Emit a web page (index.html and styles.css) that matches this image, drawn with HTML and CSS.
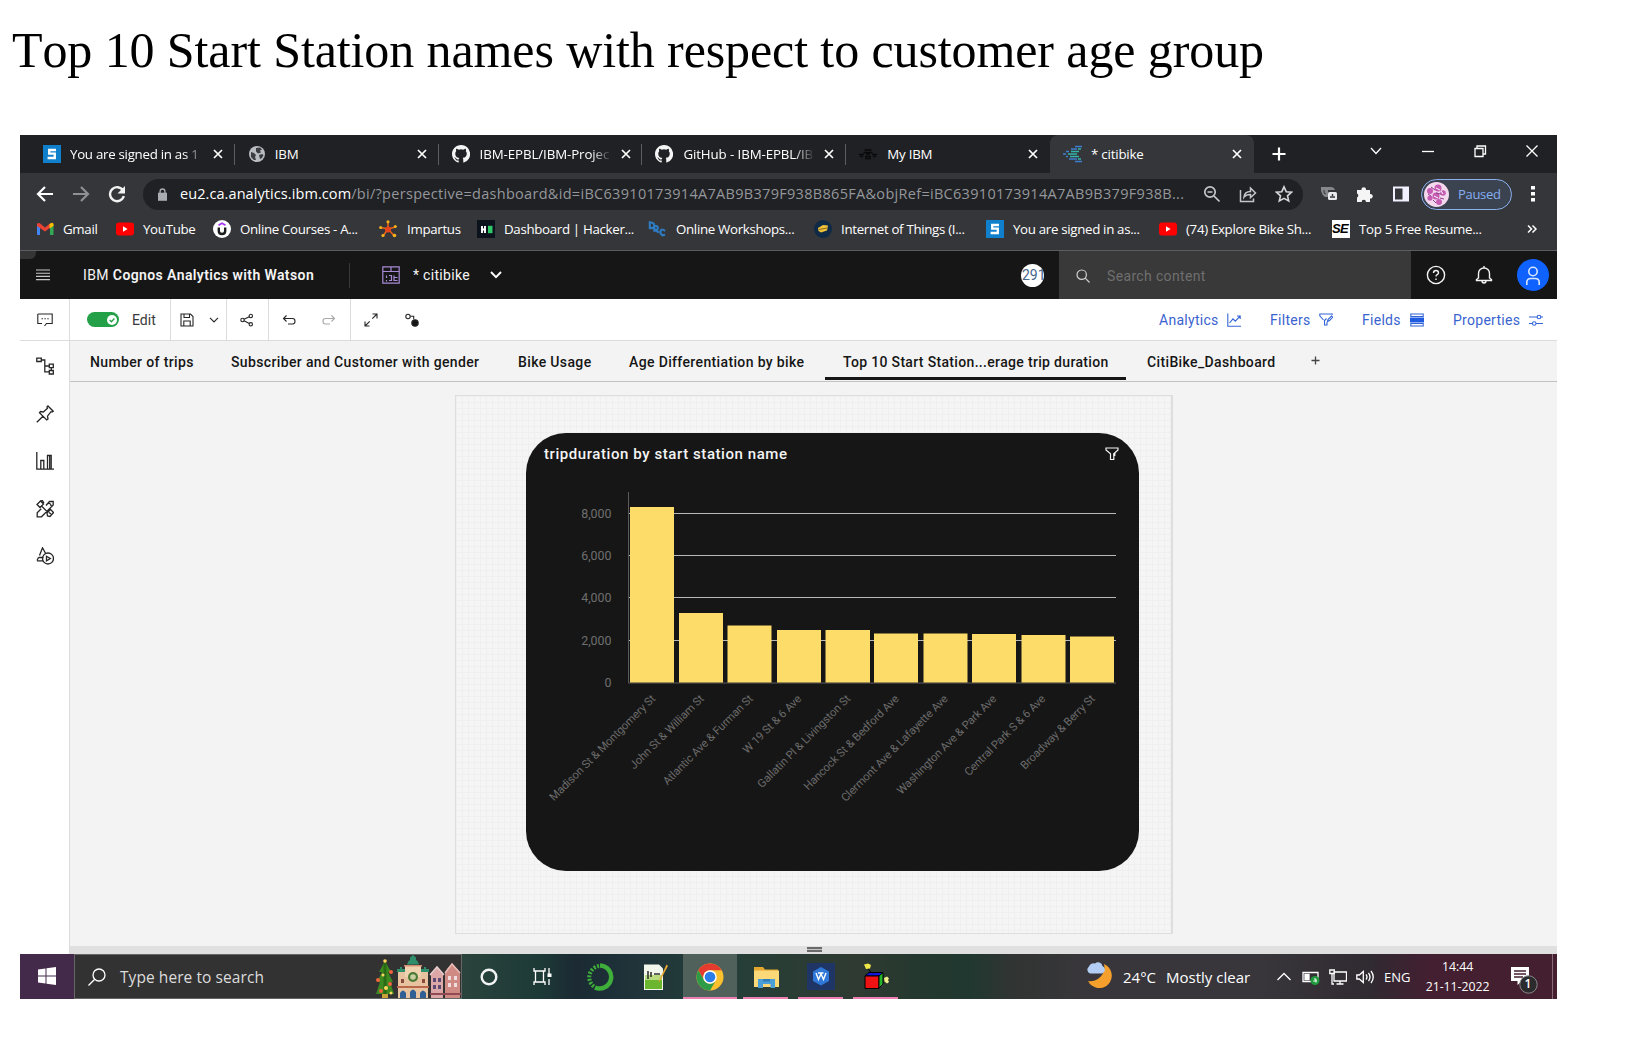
FILE: index.html
```html
<!DOCTYPE html>
<html lang="en">
<head>
<meta charset="utf-8">
<title>Top 10 Start Station names</title>
<link rel="stylesheet" href="styles.css">
</head>
<body>
<svg class="defs" aria-hidden="true">
  <symbol id="close" viewBox="0 0 10 10"><path d="M1 1l8 8M9 1l-8 8" fill="none" stroke="currentColor" stroke-width="1.7"/></symbol>
  <symbol id="s-logo" viewBox="0 0 18 18"><path d="M0 0h18v18H0z" fill="#1080cc"/><path d="M13 5H6.2v3.6h5.6V13H4.6" fill="none" stroke="#fff" stroke-width="2.3"/></symbol>
  <symbol id="github" viewBox="0 0 16 16"><path fill="#f4f4f4" d="M8 0C3.58 0 0 3.58 0 8c0 3.54 2.29 6.53 5.47 7.59.4.07.55-.17.55-.38v-1.49C3.8 14.2 3.33 12.8 3.33 12.8c-.36-.92-.89-1.17-.89-1.17-.73-.5.05-.49.05-.49.8.06 1.23.83 1.23.83.71 1.22 1.87.87 2.33.66.07-.52.28-.87.5-1.07-1.77-.2-3.64-.89-3.64-3.95 0-.87.31-1.59.82-2.15-.08-.2-.36-1.02.08-2.12 0 0 .67-.22 2.2.82a7.6 7.6 0 0 1 4 0c1.53-1.04 2.2-.82 2.2-.82.44 1.1.16 1.92.08 2.12.51.56.82 1.27.82 2.15 0 3.07-1.87 3.75-3.65 3.95.29.25.54.73.54 1.48v2.2c0 .21.15.46.55.38A8 8 0 0 0 8 0z"/></symbol>
  <symbol id="youtube" viewBox="0 0 18 18"><rect y="2.6" width="18" height="12.8" rx="3" fill="#f00"/><path d="M7 6.300v5.400l4.600-2.700z" fill="#fff"/></symbol>
</svg>

<h1 class="title">Top 10 Start Station names with respect to customer age group</h1>

<main class="screen">
  <div class="tabstrip">
    <div class="tab"><svg class="fav"><use href="#s-logo"/></svg><span class="tab-name fade">You are signed in as 1</span><svg class="x"><use href="#close"/></svg></div>
    <div class="tab"><svg class="fav small" viewBox="0 0 16 16"><circle cx="8" cy="8" r="8" fill="#b9bcc0"/><path d="M2 6l3 1 2 2-1 2 1 3-2 0-3-3zM7 2l4-.5 2 2-2 1 1 2-3 1-2-2zM10 9l3-1 1.500 1-1.500 3-2 1z" fill="#3a3c40"/></svg><span class="tab-name">IBM</span><svg class="x"><use href="#close"/></svg></div>
    <div class="tab"><svg class="fav"><use href="#github"/></svg><span class="tab-name fade wide">IBM-EPBL/IBM-Projec</span><svg class="x"><use href="#close"/></svg></div>
    <div class="tab"><svg class="fav"><use href="#github"/></svg><span class="tab-name fade wide">GitHub - IBM-EPBL/IB</span><svg class="x"><use href="#close"/></svg></div>
    <div class="tab last"><svg class="fav" viewBox="0 0 18 18"><path d="M5.500 5h7M4.500 7.500h9M0 9.500h5m2-.5h4m2 .5h5M1 11.500h3m2 0h6m2 0h3M6 13.500h6" stroke="#08090a" stroke-width="1.600"/></svg><span class="tab-name">My IBM</span><svg class="x"><use href="#close"/></svg></div>
    <div class="tab active"><svg class="fav cog" viewBox="0 0 20 18"><g fill="none" stroke-width="1.500"><path stroke="#3f7fd0" d="M12 1.500h7M8 4h6M6 14h8M12 16.500h7M0 9h3M3 6.500h3M3 11.500h2"/><path stroke="#35b5a9" d="M8 6.500h8M5 9h9M7 11.500h9M15 4h3M15 14h3"/></g></svg><span class="tab-name">* citibike</span><svg class="x"><use href="#close"/></svg></div>
    <svg class="newtab" viewBox="0 0 14 14"><path d="M7 .5v13M.5 7h13" stroke="#fff" stroke-width="2.200"/></svg>
    <div class="winctl">
      <svg viewBox="0 0 14 14"><path d="M2 4l5 5.500L12 4" /></svg>
      <svg viewBox="0 0 14 14"><path d="M1 7.500h12"/></svg>
      <svg viewBox="0 0 14 14"><path d="M2 4.500h8v8H2zM4 4.500v-2.500h8.500v8H10"/></svg>
      <svg viewBox="0 0 14 14"><path d="M1.500 1.500l11 11M12.500 1.500l-11 11"/></svg>
    </div>
  </div>

  <div class="toolbar">
    <svg class="nav" viewBox="0 0 18 18"><path d="M17 9H2.500M9 2L2 9l7 7" fill="none" stroke="#fff" stroke-width="2.200"/></svg>
    <svg class="nav" viewBox="0 0 18 18"><path d="M1 9h14.500M9 2l7 7-7 7" fill="none" stroke="#8e9194" stroke-width="2.200"/></svg>
    <svg class="nav" viewBox="0 0 18 18"><path d="M15 5.500A7 7 0 1 0 15.800 11" fill="none" stroke="#f2f2f2" stroke-width="2.400"/><path d="M17 1v7.500H9.500z" fill="#f2f2f2"/></svg>
    <div class="omnibox">
      <svg class="lock" viewBox="0 0 10 14"><path d="M0 5h10v9H0z" fill="#a9acb0"/><path d="M2.300 6V3.600a2.700 2.700 0 0 1 5.400 0V6" fill="none" stroke="#a9acb0" stroke-width="1.500"/></svg>
      <span class="url"><b>eu2.ca.analytics.ibm.com</b>/bi/?perspective=dashboard&amp;id=iBC63910173914A7AB9B379F938B865FA&amp;objRef=iBC63910173914A7AB9B379F938B...</span>
      <span class="omni-icons">
        <svg viewBox="0 0 18 18"><g fill="none" stroke="#c4c7ca" stroke-width="1.700"><circle cx="7" cy="7" r="5.200"/><path d="M11 11l5.500 5.500M4.500 7h5"/></g></svg>
        <svg viewBox="0 0 18 18"><path d="M1.500 5v11.500h13V13.500M5 12c.5-4.500 3-5.500 6.500-5.500V3l5 5-5 4.500V9.500c-3 0-5 .5-6.500 2.500z" fill="none" stroke="#c4c7ca" stroke-width="1.500"/></svg>
        <svg viewBox="0 0 18 18"><path d="M9 1.800l2.200 4.900 5.300.5-4 3.600 1.200 5.200L9 13.300 4.300 16l1.200-5.200-4-3.600 5.300-.5z" fill="none" stroke="#d4d6d8" stroke-width="1.600"/></svg>
      </span>
    </div>
    <div class="ext">
      <svg viewBox="0 0 18 18"><path d="M1 2h10q3 0 4 3H8v7H5Q2 10 1 6z" fill="#85878a"/><path d="M4 5v3l2 1" fill="none" stroke="#35363a"/><rect x="8" y="7" width="9" height="8" rx="1.500" fill="#e8eaed"/><path d="M10 12h5M12.500 9v2" stroke="#35363a" stroke-width="1.400"/></svg>
      <svg viewBox="0 0 18 18"><path d="M1 5h4.500a2.300 2.300 0 1 1 4.500 0H14v4a2.300 2.300 0 1 1 0 4.500V17h-4a2.200 2.200 0 0 0-4.400 0H1v-4.500a2.200 2.200 0 0 0 0-4z" fill="#f5f5f5"/></svg>
      <svg viewBox="0 0 18 18"><path d="M2 2.500h14v13H2z" fill="none" stroke="#f0f0ff" stroke-width="2"/><path d="M10.500 2H17v14h-6.500z" fill="#f0f0ff"/></svg>
    </div>
    <div class="profile">
      <svg viewBox="0 0 25 25"><circle cx="12.500" cy="12.500" r="12.500" fill="#f3d8ee"/><g fill="#c55bb3"><circle cx="6" cy="9" r="3"/><circle cx="14" cy="6" r="3.500"/><circle cx="19" cy="11" r="2.800"/><circle cx="12" cy="14" r="3.500"/><circle cx="6" cy="16" r="2.600"/><circle cx="15" cy="20" r="3"/></g><g fill="none" stroke="#8b3f8a"><path d="M7 5l4 3M12 11l5 1M9 18l3 3M16 16l4 1M4 12l3 2"/></g><g fill="none" stroke="#fff"><path d="M12 6l4 2M10 14l4 2M17 9l2 3"/></g></svg>
      <span>Paused</span>
    </div>
    <svg class="dots" viewBox="0 0 4 16"><path d="M0 0h4v3.600H0zM0 6h4v3.600H0zM0 12h4v3.600H0z" fill="#fff"/></svg>
  </div>

  <div class="bookmarks">
    <svg viewBox="0 0 18 18"><path d="M1 4h3v11H2q-1 0-1-1z" fill="#4285f4"/><path d="M14 6l3.500-2v10.500q0 .5-1 .5H14z" fill="#34a853"/><path d="M1 3.500L3.500 3 9 7.500 14 3.500v4.300L9 11.500 1 6z" fill="#ea4335"/><path d="M13.500 4q4-2.500 4 .5v1.500l-4 2.500z" fill="#fbbc04"/></svg><span>Gmail</span>
    <svg><use href="#youtube"/></svg><span>YouTube</span>
    <svg viewBox="0 0 18 18"><circle cx="9" cy="9" r="9" fill="#fff"/><path d="M5.800 7.500v3.500q0 3 3.200 3t3.200-3V7.500" fill="none" stroke="#1c1d1f" stroke-width="2.400"/><path d="M5.500 5.300L9 3.200l3.500 2.100" fill="none" stroke="#a435f0" stroke-width="1.600"/></svg><span>Online Courses - A...</span>
    <svg viewBox="0 0 18 18"><g stroke="#e8641b" stroke-width="1.600"><path d="M9 9V1.500M9 9L1.500 7.500M9 9l-5 7M9 9l6 6.500M9 9l7.500-2"/></g><circle cx="9" cy="9.500" r="3" fill="#e8451b"/><g fill="#f6b21b"><circle cx="9" cy="1.800" r="1.600"/><circle cx="1.700" cy="7.500" r="1.500"/><circle cx="4" cy="15.500" r="1.600"/><circle cx="15.500" cy="15.500" r="1.800"/><circle cx="16.300" cy="6.500" r="1.500"/></g></svg><span>Impartus</span>
    <svg viewBox="0 0 18 18"><path d="M0 0h18v18H0z" fill="#0b121c"/><path d="M5 6v7M8 6v7M5 9.500h3" stroke="#fff" stroke-width="1.900"/><path d="M11 5.800h4.500v7.400H11z" fill="#2ec866"/></svg><span>Dashboard | Hacker...</span>
    <svg viewBox="0 0 20 18"><g fill="none" stroke="#2d7cc4" stroke-width="2.300"><path d="M2 2v6q5 0 5-3T2 1.500zM7 12V6q4-1 4 1.500T8 10l4 3M19 11q-4-3-5 0t2 5l3-.5"/></g></svg><span>Online Workshops...</span>
    <svg viewBox="0 0 18 18"><circle cx="9" cy="9" r="9" fill="#0e2a47"/><path d="M4 8l5-3 5 .5-1 5-6 2-2.500-1.500z" fill="#f0c13a"/><path d="M5 9.500l8-1.500" stroke="#8a6a16"/></svg><span>Internet of Things (I...</span>
    <svg><use href="#s-logo"/></svg><span>You are signed in as...</span>
    <svg><use href="#youtube"/></svg><span>(74) Explore Bike Sh...</span>
    <i class="se">SE</i><span>Top 5 Free Resume...</span>
    <svg class="more" viewBox="0 0 10 10"><path d="M1 1.500L4.500 5 1 8.500M5.500 1.500L9 5 5.500 8.500" fill="none" stroke="#fff" stroke-width="1.500"/></svg>
  </div>

  <header class="apphead">
    <svg class="burger" viewBox="0 0 14 12"><path d="M0 1h14M0 4.200h14M0 7.400h14M0 10.600h14" stroke="#c6c6c6" stroke-width="1.100"/></svg>
    <div class="brand">IBM <b>Cognos Analytics with Watson</b></div>
    <div class="doc">
      <svg viewBox="0 0 18 18"><g fill="none" stroke="#a98bd8" stroke-width="1.200"><path d="M.8.800h16.400v16.400H.8zM.8 5.500h16.400M9 1v4.500M4.500 9.500v2.500m0 2v1.500M7 9.500h2.500v5H7M12 9.500v5h3.500M12.500 11.500h3"/></g></svg>
      <span>* citibike</span>
      <svg class="chev" viewBox="0 0 12 8"><path d="M1 1l5 5.200L11 1" fill="none" stroke="#fff" stroke-width="1.900"/></svg>
    </div>
    <div class="badge"><span>291</span></div>
    <div class="search">
      <svg viewBox="0 0 14 14"><circle cx="5.700" cy="5.700" r="4.700"/><path d="M9.200 9.200l4.300 4.300"/></svg>
      <span>Search content</span>
    </div>
    <div class="headicons">
      <svg viewBox="0 0 20 20"><circle cx="10" cy="10" r="8.600"/><path d="M7.500 8q0-2.500 2.500-2.500t2.500 2.200q0 1.300-1.300 1.900-1.200.6-1.200 2M10 13.500v1.500"/></svg>
      <svg viewBox="0 0 20 20"><path d="M4.500 13V8.500a5.500 5.500 0 0 1 11 0V13l2 1.500v1h-15v-1zM10 3V1M8 15.500q0 2.500 2 2.500t2-2.500"/></svg>
    </div>
    <svg class="user" viewBox="0 0 32 32"><circle cx="16" cy="16" r="16" fill="#0f62fe"/><g fill="none" stroke="#d8e6ff" stroke-width="1.600"><circle cx="16" cy="12.500" r="4.200"/><path d="M9.800 26v-2.500q0-4 4-4h4.400q4 0 4 4V26"/></g></svg>
  </header>

  <div class="actions">
    <div class="cell comment"><svg viewBox="0 0 16 14"><path d="M.8 1h14.400v9.500H9.500L7.500 13M.8 1v9.500H5M4.500 5.800h1.400m1.500 0h1.400m1.500 0h1.400"/></svg></div>
    <div class="cell edit"><span class="toggle"><svg viewBox="0 0 10 10"><circle cx="5" cy="5" r="5" fill="#fff"/><path d="M2.700 5l1.700 1.700 3-3.200" fill="none" stroke="#24a148" stroke-width="1.300"/></svg></span><span>Edit</span></div>
    <div class="cell save"><svg viewBox="0 0 14 14"><path d="M1 1h9.500L13 3.500V13H1zM4 1v3.500h5.500V1M3.800 13V8h6.400v5"/></svg><svg class="mini" viewBox="0 0 10 6"><path d="M1 .8L5 5 9 .8"/></svg></div>
    <div class="cell share"><svg viewBox="0 0 14 14"><circle cx="2.500" cy="7" r="1.700"/><circle cx="10.800" cy="3" r="1.700"/><circle cx="10.800" cy="11.300" r="1.700"/><path d="M4 6.200l5.300-2.500M4 7.800l5.300 2.700"/></svg></div>
    <div class="cell undo"><svg viewBox="0 0 14 14"><path d="M4.500 2.500L1.500 5.500l3 3M1.500 5.500h9q2.500 0 2.500 2.700T10.500 11H6"/></svg><svg class="off" viewBox="0 0 14 14"><path d="M9.500 2.500l3 3-3 3M12.500 5.500h-9Q1 5.500 1 8.200T3.500 11H8"/></svg></div>
    <div class="cell view"><svg viewBox="0 0 14 14"><path d="M8.500 1H13v4.500M13 1L8.300 5.700M5.500 13H1V8.500M1 13l4.700-4.700"/></svg><svg viewBox="0 0 14 14"><circle cx="3" cy="3.500" r="2.200"/><path d="M5.200 3.200h3.500v3"/><circle cx="10" cy="10" r="3.200" fill="#161616"/></svg></div>
    <div class="panels">
      <span>Analytics</span><svg viewBox="0 0 14 14"><path d="M.8.500v12.700H14M2.500 10L6 5.800l2.300 2.400 4.700-5M10 3h3.200v3"/></svg>
      <span>Filters</span><svg viewBox="0 0 14 14"><path d="M7.500 5.500l-2 2V12h2.500V9M4.500 7L.8 2.800V1h12.400v1M8.500 8.500l.5-2 3.500-3.500 1.200 1.300-3.500 3.500z"/></svg>
      <span>Fields</span><svg viewBox="0 0 14 14"><path d="M.8 1h12.400v2.500H.8zM.8 10.500h12.400V13H.8z"/><path d="M0 4.500h14v5H0z" fill="#1f5ce0" stroke="none"/></svg>
      <span>Properties</span><svg viewBox="0 0 14 14"><path d="M0 4h8M11.800 4H14M0 10.500h3.300M7 10.500h7"/><circle cx="10" cy="4" r="1.800"/><circle cx="5.200" cy="10.500" r="1.800"/></svg>
    </div>
  </div>

  <div class="work">
    <nav class="rail">
      <svg viewBox="0 0 18 18"><path d="M.8 1.200h4.500v3.300H.8zM5.300 3h3.500v11.800h4.500M8.800 9h4.500M13.300 7.200h4v3.500h-4zM13.300 13.500h4V17h-4zM15.300 10.700v2.800"/></svg>
      <svg viewBox="0 0 18 18"><path d="M12 1l5.200 5.200-1.200.8-1-.3-3.500 4.500.5 2.800-1.300 1L3.500 7.700l1-1.200 2.800.5L11.500 3.300 11 2zM7 11.200L.8 17.300"/></svg>
      <svg viewBox="0 0 18 18"><path d="M.8 0v17.200H18M4.800 17V8.500h3V17M11.500 17V3.500h3.700V17M13.700 4v13"/></svg>
      <svg viewBox="0 0 18 18"><path d="M1 4.500L4.500 1l3 3L4 7.500zM4.500 1l2-.3L8 3M10 5.500l3.500-4h3.700V5L5.500 16.800H1.200v-4l4-4M12 3.500q3-.5 3 2.500M11 13l3.500-3.500 3 3-3.500 4-2.500-.5zM6 6.500l6 6M13 12.500l2 1.500"/></svg>
      <svg viewBox="0 0 18 18"><path d="M3.500 8.500L6.500.8l3 5.500M1 13.800h6M2.500 10.500h5M1 13.500l1.500-3"/><circle cx="12" cy="11.500" r="5.500"/><path d="M10.500 9.300v4.500l3.800-2.300z"/></svg>
    </nav>
    <section class="stage">
      <div class="sheets">
        <span>Number of trips</span><span>Subscriber and Customer with gender</span><span>Bike Usage</span><span>Age Differentiation by bike</span><span class="on">Top 10 Start Station...erage trip duration</span><span>CitiBike_Dashboard</span>
        <svg viewBox="0 0 9 9"><path d="M4.500.5v8M.5 4.500h8" stroke="#444" stroke-width="1.300"/></svg>
      </div>
      <div class="canvas-area">
        <div class="canvas">
          <article class="card">
            <header><h2>tripduration by start station name</h2><svg viewBox="0 0 14 14"><path d="M1 1h12v2L8.800 6.800V12.500H5.500V6.800L1 3z" fill="none" stroke="#f4f4f4" stroke-width="1.200"/><path d="M9.500 6v3" stroke="#f4f4f4" stroke-width="1.800"/></svg></header>
            <svg class="chart" viewBox="0 0 613 400">
              <g class="grid"><path d="M102 42.500h488M102 84.500h488M102 126.500h488M102 169.500h488"/></g>
              <path class="axis" d="M102.500 21v191H590"/>
              <g class="bars">
                <rect x="104" y="36" width="44" height="175.500"/><rect x="153" y="142" width="44" height="69.500"/><rect x="201.500" y="154.500" width="44" height="57"/><rect x="251" y="159" width="44" height="52.500"/><rect x="299.500" y="159" width="44.500" height="52.500"/><rect x="348" y="162.500" width="44" height="49"/><rect x="397.500" y="162.500" width="44" height="49"/><rect x="446" y="163" width="44" height="48.500"/><rect x="495.500" y="164" width="44" height="47.500"/><rect x="544" y="165.500" width="44" height="46"/>
              </g>
              <g class="yl"><text x="85.500" y="46.500">8,000</text><text x="85.500" y="88.500">6,000</text><text x="85.500" y="131">4,000</text><text x="85.500" y="173.500">2,000</text><text x="85.500" y="215.500">0</text></g>
              <g class="xl">
                <text transform="translate(130 228.500) rotate(-45)">Madison St &amp; Montgomery St</text>
                <text transform="translate(178.500 228.500) rotate(-45)">John St &amp; William St</text>
                <text transform="translate(227.500 228.500) rotate(-45)">Atlantic Ave &amp; Furman St</text>
                <text transform="translate(276 228.500) rotate(-45)">W 19 St &amp; 6 Ave</text>
                <text transform="translate(325 228.500) rotate(-45)">Gallatin Pl &amp; Livingston St</text>
                <text transform="translate(373.500 228.500) rotate(-45)">Hancock St &amp; Bedford Ave</text>
                <text transform="translate(422.500 228.500) rotate(-45)">Clermont Ave &amp; Lafayette Ave</text>
                <text transform="translate(471 228.500) rotate(-45)">Washington Ave &amp; Park Ave</text>
                <text transform="translate(520 228.500) rotate(-45)">Central Park S &amp; 6 Ave</text>
                <text transform="translate(569.500 228.500) rotate(-45)">Broadway &amp; Berry St</text>
              </g>
            </svg>
          </article>
        </div>
      </div>
      <div class="splitter"><i></i></div>
    </section>
  </div>

  <footer class="taskbar">
    <div class="start"><svg viewBox="0 0 18 18"><path d="M0 2.500L7.500 1.500v7H0zM8.500 1.300L18 0v8.500H8.500zM0 9.500h7.500v7L0 15.500zM8.500 9.500H18V18l-9.500-1.300z" fill="#fff"/></svg></div>
    <div class="winsearch">
      <svg class="glass" viewBox="0 0 18 18"><circle cx="11" cy="7" r="6"/><path d="M6.700 11.300L.5 17.500"/></svg>
      <span>Type here to search</span>
      <svg class="village" viewBox="0 0 86 43">
        <path d="M10 6l6 11h-3l5 10h-3l4 12H1l4-12H2l5-10H4z" fill="#3c8a1f"/><path d="M10 8v31" stroke="#2a6a16" stroke-width="3"/><g fill="#f0643c"><circle cx="3" cy="25" r="2"/><circle cx="16" cy="17" r="2"/><circle cx="15" cy="29" r="2"/><circle cx="6" cy="36" r="2"/></g><g fill="#ffd75e"><circle cx="10" cy="6" r="1.800"/><circle cx="8" cy="20" r="1.500"/><circle cx="11" cy="33" r="2"/><circle cx="16" cy="38" r="1.500"/></g><path d="M7 39h6v4H7z" fill="#c9a23a"/>
        <path d="M23 17h30v26H23z" fill="#e8c3a0"/><path d="M30 10h16v12H30z" fill="#efd2b0"/><path d="M32 9.500h12l-1.500-3.500L41 5V2.500L38 0l-3 2.500V5l-1.500 1zM22 14h3v-2h2v2h3v3h-8zM46 14h3v-2h2v2h3v3h-8z" fill="#2f8f6b"/><path d="M29 10h18v1.500H29z" fill="#d68d72"/><circle cx="38" cy="22" r="5" fill="#4a7a34"/><circle cx="38" cy="22" r="2.800" fill="#c8cfa0"/><path d="M22 31h32v2H22z" fill="#b9674a"/><g fill="#2f5f95"><path d="M25 43v-5q3-5 6 0v5zM35 43v-6q3-5 6 0v6zM45 43v-5q3-5 6 0v5z"/></g><g fill="#8b4a3c"><path d="M26 24h3v4h-3zM47 24h3v4h-3z"/></g>
        <path d="M56 43V19l3-3 3-4 3 4 3 3v24z" fill="#dba7a7"/><path d="M55 20l7-8 7 8" fill="none" stroke="#e9cfd0" stroke-width="1.500"/><path d="M70 43V18l3-5 4-4 4 4 4 5v25z" fill="#d08a84"/><path d="M70 18l7-9 8 9" fill="none" stroke="#e8bdb8" stroke-width="1.500"/><g fill="#5c4a72"><path d="M58 23h3v4h-3zM63 23h3v4h-3zM58 30h3v4h-3zM63 30h3v4h-3z"/></g><g fill="#f1dce0"><path d="M73 21h3v4h-3zM79 21h3v4h-3zM73 28h3v4h-3zM79 28h3v4h-3z"/></g><path d="M55 38h31v2H55z" fill="#8f4a54"/>
      </svg>
    </div>
    <div class="apps">
      <div><svg viewBox="0 0 28 28"><circle cx="14" cy="14" r="7.300" fill="none" stroke="#f2f4f4" stroke-width="2.400"/></svg></div>
      <div><svg viewBox="0 0 28 28"><path d="M5 5v3h11V5M5 22v-3h11v3M6.500 8v11M14.500 8v11M20 5v6m0 5v6" fill="none" stroke="#fff" stroke-width="1.300"/><path d="M18.500 10.500h4v3.500h-4z" fill="#fff"/></svg></div>
      <div><svg viewBox="0 0 28 28"><path d="M14 2.500a11.500 11.500 0 1 1-5 22" fill="none" stroke="#3fae3b" stroke-width="4.500"/><path d="M13 3A11.500 11.500 0 0 0 8.500 24" fill="none" stroke="#3fae3b" stroke-width="4" stroke-dasharray="2 1.500"/></svg></div>
      <div><svg viewBox="0 0 28 28"><path d="M4 1.500h15l4 4V27H4z" fill="#f3f6ea"/><path d="M5 14h17v12H5z" fill="#6cb52e"/><path d="M5 12h17v5H5z" fill="#b8dc7e"/><path d="M8 8v8M11 9v5M14 11h6" stroke="#333" stroke-width="1.600"/><path d="M26.500 1.500L19 17.500l-.5 2 1.500-1.500L28 3z" fill="#e6a433"/></svg></div>
      <div class="current"><svg viewBox="0 0 28 28"><circle cx="14" cy="14" r="13.500" fill="#fbc02d"/><path d="M14 .5A13.500 13.500 0 0 1 25.700 7.300H14A6.700 6.700 0 0 0 8.200 17.300L2.300 7.300A13.500 13.500 0 0 1 14 .5z" fill="#e53b2e"/><path d="M2.300 7.300l5.900 10A6.700 6.700 0 0 0 19.800 17.400L14 27.500A13.500 13.500 0 0 1 2.300 7.300z" fill="#2e9c47"/><circle cx="14" cy="14" r="6.800" fill="#fff"/><circle cx="14" cy="14" r="5.300" fill="#2b7de9"/></svg></div>
      <div class="open"><svg viewBox="0 0 28 28"><path d="M2 4h9l2 2.500h13V8H2z" fill="#e5a62d"/><path d="M2 7.500h25V24H2z" fill="#fbd978"/><path d="M6 16h17v9h-4.500v-4h-7.500v4H6z" fill="#4a9fd8"/><path d="M11 16h7v2.500h-7z" fill="#2f7db8"/></svg></div>
      <div class="open"><svg viewBox="0 0 28 28"><path d="M0 0h28v27H0z" fill="#1f3566"/><path d="M14 4l8 4.500v9.500l-8 4.500-8-4.500V8.500z" fill="#2f78d8"/><path d="M9 10l2.500 6.500L14 11l2.500 5.500L19 10M11 10h5.500" fill="none" stroke="#fff" stroke-width="1.400"/></svg></div>
      <div class="open"><svg viewBox="0 0 28 28"><path d="M3 13l4-3.500h14L17 13z" fill="#1316e0" stroke="#000"/><path d="M3 13h14v12.500H3z" fill="#ee1212" stroke="#000"/><path d="M17 13l4-3.500V21l-4 4z" fill="#25b52c" stroke="#000"/><path d="M6 5q2 5 5 5" stroke="#000" fill="none"/><path d="M2 1.500l4-1 3 1.500-1 3.500-4 .5z" fill="#efe94a"/><path d="M22 15l3-1.500 2 2-1 1.500 1 2-2 1.500-2.500-2z" fill="#f3f08a"/></svg></div>
    </div>
    <div class="weather">
      <svg viewBox="0 0 28 28"><path d="M18 2a12.500 12.500 0 1 1-16 17A14 14 0 0 0 18 2z" fill="#f5a02c"/><path d="M4 11.500a4 4 0 0 1-1-7 4.500 4.500 0 0 1 6-3 4.500 4.500 0 0 1 7.500 2.500 4 4 0 0 1-.5 7.500z" fill="#b3cdf5"/></svg>
      <span>24°C</span><span>Mostly clear</span>
    </div>
    <div class="tray">
      <svg viewBox="0 0 18 18"><path d="M2.500 12L9 5.500l6.500 6.500"/></svg>
      <svg viewBox="0 0 18 18"><path d="M1 4.500h15v9H1z"/><path d="M3 6.500h4v5H3z" fill="#fff"/><circle cx="13" cy="12.500" r="4.500" fill="#1f9a3c" stroke="none"/><path d="M11.300 13h3.400M12 11h2v3.500" stroke-width="1"/></svg>
      <svg viewBox="0 0 18 18"><path d="M5 4h12.500v9H5zM11 13v3M7.500 16h7M.8 2h4.500v3.500H.8zM3 5.500V16h2"/></svg>
      <svg viewBox="0 0 18 18"><path d="M.8 7v4h2.500l4 3.500v-11l-4 3.500zM10 6.500q2 2.500 0 5M12.500 4.800q3 4.200 0 8.400M15 3q4.500 6 0 12"/></svg>
      <span class="lang">ENG</span>
    </div>
    <div class="clock"><span>14:44</span><span>21-11-2022</span></div>
    <div class="notif"><svg viewBox="0 0 28 28"><path d="M1 1h18v14h-7l-4.500 4v-4H1z" fill="#fff"/><path d="M4 5h12M4 8h12M4 11h9" stroke="#45202f" stroke-width="1.300"/><circle cx="18.500" cy="18.500" r="8.700" fill="#2b2a2c" stroke="#8a8a8a"/></svg><b>1</b></div>
  </footer>
</main>
</body>
</html>
```
FILE: styles.css
```css
* { box-sizing: border-box; }
body { margin: 0; background: #fff; width: 1627px; height: 1061px; overflow: hidden; font-family: "Open Sans", "Noto Sans", sans-serif; }
svg { display: block; flex: none; }
.defs { position: absolute; width: 0; height: 0; }
.title { margin: 0; height: 135px; padding: 21px 0 0 12px; font: 400 50px/58px "Liberation Serif", serif; font-kerning: none; letter-spacing: -0.1px; color: #000; white-space: nowrap; }
.screen { width: 1537px; height: 864px; margin-left: 20px; display: flex; flex-direction: column; background: #fff; }

/* Browser chrome */
.tabstrip { height: 38px; background: #202124; display: flex; padding-left: 11px; color: #fff; }
.tab { width: 203.8px; height: 38px; display: grid; grid-template-columns: 27px 143px 10px; padding-left: 12px; align-items: center; position: relative; }
.tab::after { content: ""; position: absolute; right: 0; top: 9px; width: 1px; height: 21px; background: #5b5d61; }
.tab.last::after, .tab.active::after { display: none; }
.tab.active { background: #35363a; border-radius: 8px 8px 0 0; }
.fav { width: 18px; height: 18px; }
.fav.small { width: 16px; height: 16px; margin-left: 2px; }
.fav.cog { width: 20px; }
.tab:nth-child(2) { grid-template-columns: 28px 142px 10px; }
.tab:nth-child(n+3) { padding-left: 13px; grid-template-columns: 28px 141px 10px; }
.tab-name { font-size: 13.3px; letter-spacing: -0.2px; white-space: nowrap; line-height: 20px; }
.tab-name.fade { width: 136px; letter-spacing: -0.28px; -webkit-mask-image: linear-gradient(90deg, #000 84%, transparent 99%); mask-image: linear-gradient(90deg, #000 84%, transparent 99%); }
.tab-name.fade.wide { width: 133px; letter-spacing: -0.1px; }
.x { width: 10px; height: 10px; }
.newtab { width: 14px; height: 14px; margin: 12px 0 0 18px; }
.winctl { display: grid; grid-template-columns: 52px 52px 52px 14px; margin: 9px 0 0 83px; }
.winctl svg { width: 14px; height: 14px; fill: none; stroke: #fff; stroke-width: 1.3; }

.toolbar { height: 39px; background: #35363a; display: flex; align-items: center; padding: 3px 0 0 16px; }
.nav { width: 18px; height: 18px; margin-right: 18px; }
.omnibox { width: 1160px; height: 31px; margin-left: -1px; border-radius: 16px; background: #202124; display: flex; align-items: center; padding-left: 15px; }
.lock { width: 9px; height: 13px; margin-right: 13px; }
.url { width: 1017px; font-size: 14.5px; letter-spacing: 0.3px; line-height: 24px; color: #94979b; white-space: nowrap; }
.url b { font-weight: 400; color: #fff; letter-spacing: 0.08px; }
.omni-icons { display: flex; gap: 18px; margin-left: 6px; }
.omni-icons svg, .ext svg { width: 18px; height: 18px; }
.ext { display: flex; gap: 18px; margin-left: 17px; }
.profile { width: 91px; height: 31px; margin-left: 11px; border: 1px solid #8ab0ee; border-radius: 16px; background: #3b4350; display: flex; align-items: center; padding-left: 2px; gap: 9px; font-size: 13px; letter-spacing: -0.3px; color: #86aef2; }
.profile svg { width: 25px; height: 25px; }
.dots { width: 4px; height: 16px; margin-left: 19px; }

.bookmarks { height: 39px; background: #35363a; border-bottom: 1px solid #5c5d60; display: grid; grid-template-columns: 27px 53px 27px 70px 27px 139px 28px 70px 27px 144px 28px 138px 27px 145px 27px 146px 27px 146px 27px 168px 10px; padding: 0 0 4px 16px; align-items: center; color: #fff; font-size: 13.3px; letter-spacing: -0.32px; white-space: nowrap; }
.bookmarks svg { width: 18px; height: 18px; }
.bookmarks .more { width: 10px; height: 10px; }
.se { width: 18px; height: 18px; background: #fff; color: #000; font: italic 700 13px/18px "Liberation Sans", sans-serif; letter-spacing: -0.6px; }

/* Application header */
.apphead { height: 48px; background: #161616; color: #f4f4f4; display: flex; align-items: center; font-family: Roboto, sans-serif; font-size: 14px; }
.apphead::before { content: ""; align-self: flex-start; width: 16px; height: 8px; margin-right: -16px; background: #353535; border-radius: 0 0 6px 0; }
.burger { width: 14px; height: 12px; margin-left: 16px; }
.brand { width: 267px; margin-left: 33px; border-right: 1px solid #393939; line-height: 25px; letter-spacing: 0.4px; }
.brand b { font-weight: 600; }
.doc { width: 671px; display: flex; align-items: center; padding-left: 32px; letter-spacing: 0.3px; }
.doc svg { width: 18px; height: 18px; margin-right: 13px; }
.doc .chev { width: 12px; height: 8px; margin: 0 0 0 20px; }
.badge { width: 23px; height: 23px; border-radius: 50%; background: #fff; color: #46658c; display: flex; padding-left: 1px; align-items: center; font-size: 14px; }
.search { width: 352px; height: 48px; margin-left: 15px; background: #393939; color: #6f6f6f; display: flex; align-items: center; padding: 1px 0 0 17px; letter-spacing: 0.35px; }
.search svg { width: 14px; height: 14px; margin-right: 17px; fill: none; stroke: #d0d0d0; stroke-width: 1.2; }
.headicons { display: flex; gap: 28px; margin-left: 15px; }
.headicons svg { width: 20px; height: 20px; fill: none; stroke: #f4f4f4; stroke-width: 1.4; }
.user { width: 32px; height: 32px; margin-left: 23px; }

.actions { height: 42px; border-bottom: 1px solid #dcdcdc; display: flex; font-family: Roboto, sans-serif; font-size: 14px; color: #393939; }
.cell { display: flex; align-items: center; border-right: 1px solid #dcdcdc; }
.cell svg { width: 14px; height: 14px; fill: none; stroke: #262626; stroke-width: 1.1; }
.comment { width: 50px; padding-left: 17px; }
.cell.comment svg { width: 16px; }
.edit { width: 101px; padding-left: 17px; gap: 13px; }
.toggle { width: 32px; height: 15px; border-radius: 8px; background: #24a148; display: flex; align-items: center; justify-content: flex-end; padding-right: 2px; }
.cell .toggle svg { width: 10px; height: 10px; stroke: none; }
.save { width: 56px; padding-left: 9px; gap: 15px; }
.cell .mini { width: 10px; height: 6px; }
.share { width: 42px; padding-left: 13px; }
.undo { width: 82px; padding-left: 13px; gap: 26px; }
.cell .off { stroke: #a8a8a8; }
.view { padding-left: 13px; gap: 27px; border: 0; }
.panels { display: grid; grid-template-columns: 69px 43px 49px 43px 48px 43px 76px 14px; margin-left: auto; padding-right: 14px; align-items: center; color: #3a63d0; letter-spacing: 0.28px; }
.panels svg { width: 14px; height: 14px; fill: none; stroke: #3465d8; stroke-width: 1.1; }
.panels span:first-child { padding-left: 1px; }

/* Dashboard */
.work { height: 613px; display: flex; }
.rail { width: 50px; border-right: 1px solid #dcdcdc; display: flex; flex-direction: column; padding: 16px 0 0 16px; gap: 29.5px; }
.rail svg { width: 18px; height: 18px; fill: none; stroke: #262626; stroke-width: 1.3; }
.stage { flex: 1; display: flex; flex-direction: column; background: #f3f3f3; }
.sheets { height: 41px; border-bottom: 1px solid #c2c2c2; display: flex; font: 500 14px/40px Roboto, sans-serif; letter-spacing: 0.36px; color: #161616; white-space: nowrap; padding-left: 2px; }
.sheets span { height: 39px; padding: 1px 18px 0; }
.sheets span:nth-child(1) { width: 142px; }
.sheets span:nth-child(2) { width: 287px; padding-left: 17px; }
.sheets span:nth-child(3) { width: 111px; padding-left: 17px; }
.sheets span:nth-child(4) { width: 213px; padding-left: 17px; }
.sheets span:nth-child(5) { width: 301px; letter-spacing: 0.33px; }
.sheets span:nth-child(6) { padding-left: 21px; width: 185px; }
.sheets .on { border-bottom: 3px solid #161616; }
.sheets svg { width: 9px; height: 9px; margin-top: 15px; }
.canvas-area { flex: 1; padding: 13px 0 0 385px; }
.canvas { width: 718px; height: 539px; border: 1px solid #dedede; border-right-width: 2px; padding: 37px 0 0 70px; background-color: #f5f5f5; background-image: linear-gradient(#efefef 1px, transparent 1px), linear-gradient(90deg, #efefef 1px, transparent 1px); background-size: 6px 6px; }
.card { width: 613px; height: 438px; border-radius: 40px; background: #161616; overflow: hidden; }
.card header { height: 38px; padding: 3px 27px 0 18px; display: flex; justify-content: space-between; align-items: center; }
.card h2 { margin: 0; font: 500 15px/20px Roboto, sans-serif; letter-spacing: 0.57px; color: #f4f4f4; }
.card header svg { width: 14px; height: 14px; margin-right: -7px; }
.chart { width: 613px; height: 400px; font-family: Roboto, sans-serif; }
.grid path { stroke: #b8b8b8; stroke-width: 1.1; }
.axis { fill: none; stroke: #5a5a5a; }
.bars rect { fill: #fddc69; }
.yl text { font-size: 12.4px; fill: #6f6f6f; text-anchor: end; }
.xl text { font-size: 11.3px; fill: #6a6a6a; text-anchor: end; letter-spacing: -0.1px; }
.splitter { height: 8px; background: #dfe0df; display: flex; justify-content: center; padding: 1px 0 0 0; }
.splitter i { width: 15px; height: 5px; margin-right: -1px; border: solid #6a6a6a; border-width: 2px 0; background: #c4c4c4; }

/* Desktop taskbar */
.taskbar { height: 45px; display: flex; color: #fff; background: linear-gradient(90deg, #43294a 0, #43294a 54px, #2a433c 444px, #1d3a37 520px, #1b2a33 555px, #20343a 620px, #243f38 700px, #2f3a31 840px, #24382f 900px, #203830 950px, #303432 990px, #38363a 1060px, #38363b 1240px, #302a31 1350px, #431f31 1410px, #431f2f 1537px); }
.start { width: 54px; padding: 13px 0 0 18px; }
.start svg { width: 18px; height: 18px; }
.winsearch { width: 388px; border: 1px solid #666; background: #323232; display: flex; align-items: center; padding-left: 13px; }
.glass { width: 18px; height: 18px; fill: none; stroke: #fff; stroke-width: 1.3; }
.winsearch span { width: 256px; margin-left: 14px; font-size: 15.5px; letter-spacing: 0.07px; color: #dcdcdc; }
.village { width: 86px; height: 43px; }
.apps { display: grid; grid-template-columns: 54px 54px 60px 48px 56px 55px 55px 55px; }
.apps div { padding-top: 9px; display: flex; justify-content: center; border-bottom: 2px solid transparent; }
.apps svg { width: 28px; height: 28px; }
.apps .current { width: 54px; margin-left: 5px; background: #50605a; border-color: #ee7fb2; }
.apps .open { width: 45px; margin-left: 9px; border-color: #ee7fb2; }
.weather { display: flex; align-items: center; font-size: 15px; margin-left: 187px; }
.weather svg { width: 28px; height: 28px; margin: -1px 9px 0 0; }
.weather span { margin-right: 10px; white-space: nowrap; }
.tray { display: flex; align-items: center; gap: 9px; margin-left: 15px; font-size: 13px; }
.tray svg { width: 18px; height: 18px; fill: none; stroke: #fff; stroke-width: 1.3; }
.lang { margin-left: 1px; }
.clock { width: 66px; margin-left: 14px; display: flex; flex-direction: column; align-items: center; padding-top: 3px; font-size: 12.3px; line-height: 20px; letter-spacing: -0.05px; }
.notif { width: 28px; margin: 12px 0 0 19px; position: relative; }
.notif svg { width: 28px; height: 28px; }
.notif b { position: absolute; left: 15px; top: 9px; font-size: 12px; line-height: 18px; font-weight: 600; }
.taskbar::after { content: ""; width: 1px; margin-left: auto; margin-right: 4px; background: #8a6a78; }
```
